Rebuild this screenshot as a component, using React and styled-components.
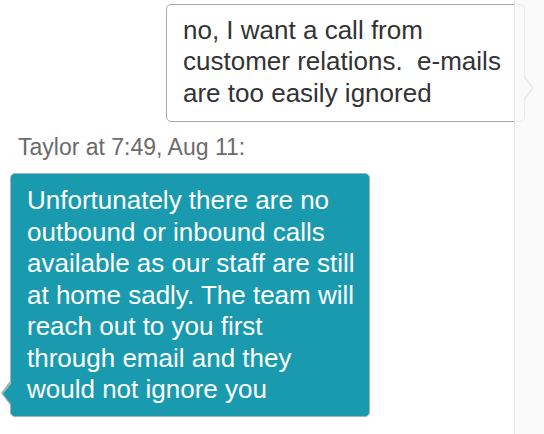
import React from "react";
import styled, { createGlobalStyle } from "styled-components";

const Global = createGlobalStyle`
  html, body { margin: 0; padding: 0; background: #ffffff; }
  body { font-family: "Liberation Sans", Arial, Helvetica, sans-serif; }
`;

const Screen = styled.div`
  position: relative;
  width: 544px;
  height: 434px;
  overflow: hidden;
  background: #ffffff;
  display: flex;
  flex-direction: column;
  padding-top: 4px;
  box-sizing: border-box;
`;

const Row = styled.div`
  display: flex;
  justify-content: ${(p) => (p.$out ? "flex-end" : "flex-start")};
  padding: ${(p) => (p.$out ? "0 19px 0 0" : "0 0 0 10px")};
`;

const Bubble = styled.div`
  position: relative;
  box-sizing: border-box;
  width: ${(p) => p.$w}px;
  font-size: 26px;
  line-height: 31.5px;
  white-space: pre-wrap;
  border-radius: 5px;
  border: 1.5px solid ${(p) => (p.$out ? "#ababab" : "#a3b4b8")};
  background: ${(p) => (p.$out ? "#ffffff" : "#1a9aaf")};
  color: ${(p) => (p.$out ? "#333333" : "#ffffff")};
  padding: ${(p) => (p.$out ? "9.5px 10px 12px 16px" : "11px 10px 10.5px 16px")};

  &::before,
  &::after {
    content: "";
    position: absolute;
    width: 0;
    height: 0;
    border-style: solid;
  }
  &::before {
    ${(p) =>
      p.$out
        ? `right: -10px; top: 71px; border-width: 12px 0 12px 9px; border-color: transparent transparent transparent #ababab;`
        : `left: -10px; bottom: 11px; border-width: 12px 9px 12px 0; border-color: transparent #a3b4b8 transparent transparent;`}
  }
  &::after {
    ${(p) =>
      p.$out
        ? `right: -8px; top: 72.5px; border-width: 10.5px 0 10.5px 8px; border-color: transparent transparent transparent #ffffff;`
        : `left: -8px; bottom: 12.5px; border-width: 10.5px 8px 10.5px 0; border-color: transparent #1a9aaf transparent transparent;`}
  }
`;

const Stamp = styled.div`
  font-size: 23px;
  line-height: 28px;
  color: #6b6b6b;
  padding-left: 18px;
  margin: 11px 0 12px;
`;

const ScrollTrack = styled.div`
  position: absolute;
  top: 0;
  right: 0;
  bottom: 0;
  width: 29px;
  background: rgba(249, 249, 249, 0.82);
  border-left: 1px solid #e3e3e3;
`;

const outgoing = ["no, I want a call from", "customer relations.  e-mails", "are too easily ignored"];
const incoming = [
  "Unfortunately there are no",
  "outbound or inbound calls",
  "available as our staff are still",
  "at home sadly. The team will",
  "reach out to you first",
  "through email and they",
  "would not ignore you",
];

const Lines = ({ lines }) =>
  lines.map((l, i) => (
    <React.Fragment key={i}>
      {l}
      {i < lines.length - 1 && <br />}
    </React.Fragment>
  ));

export default function App() {
  return (
    <>
      <Global />
      <Screen>
        <Row $out>
          <Bubble $out $w={359}>
            <Lines lines={outgoing} />
          </Bubble>
        </Row>
        <Stamp>Taylor at 7:49, Aug 11:</Stamp>
        <Row>
          <Bubble $w={360}>
            <Lines lines={incoming} />
          </Bubble>
        </Row>
        <ScrollTrack />
      </Screen>
    </>
  );
}
